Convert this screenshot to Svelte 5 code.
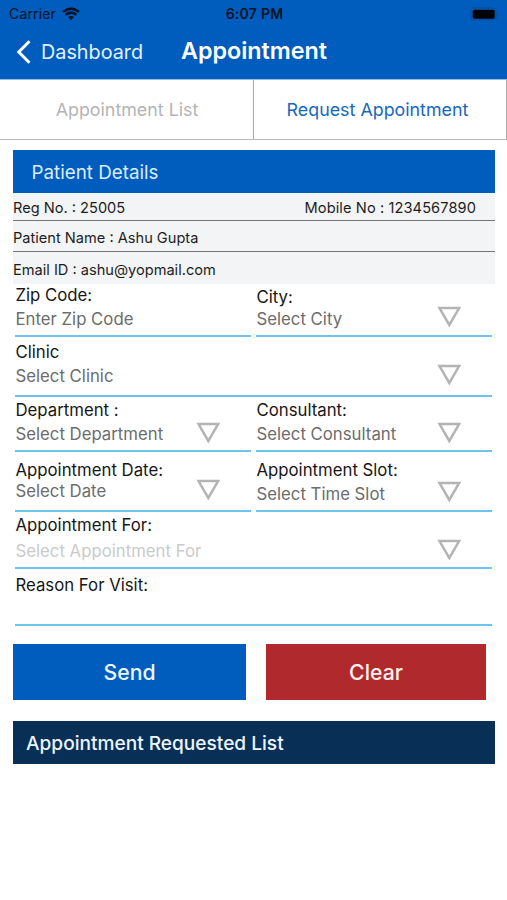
<script>
  // Offsets are measured from the top of each row.
  const rows = [
    { h: 53, fields: [
      { label: 'Zip Code:', hint: 'Enter Zip Code', lt: 1, ht: 25 },
      { label: 'City:', hint: 'Select City', lt: 3, ht: 25, at: 22 }
    ] },
    { h: 60, fields: [{ label: 'Clinic', hint: 'Select Clinic', lt: 5, ht: 29, at: 26.5 }] },
    { h: 55, fields: [
      { label: 'Department :', hint: 'Select Department', lt: 3, ht: 27, at: 24.5 },
      { label: 'Consultant:', hint: 'Select Consultant', lt: 3, ht: 27, at: 24.5 }
    ] },
    { h: 60, fields: [
      { label: 'Appointment Date:', hint: 'Select Date', lt: 8, ht: 29, at: 26.5 },
      { label: 'Appointment Slot:', hint: 'Select Time Slot', lt: 8, ht: 32, at: 29 }
    ] },
    { h: 57, fields: [{ label: 'Appointment For:', hint: 'Select Appointment For', lt: 3, ht: 29, at: 26.5, faint: true }] },
    { h: 57, fields: [{ label: 'Reason For Visit:', hint: '', lt: 6, ht: 30 }] }
  ];
</script>

<div class="screen">
  <header>
    <div class="status">
      <div class="carrier">
        <span>Carrier</span>
        <svg width="18" height="14" viewBox="0 0 18 14">
          <path d="M9 13.2 6 10.1Q9 7.8 12 10.1Z" fill="#071426" />
          <path d="M3.7 7.7Q9 3.6 14.3 7.7M1 4.9Q9-1.6 17 4.9" fill="none" stroke="#071426" stroke-width="2.5" />
        </svg>
      </div>
      <span class="time">6:07 PM</span>
      <div class="power">
        <svg width="30" height="14" viewBox="0 0 30 14">
          <rect x="1" y="1" width="25" height="12" rx="3.2" fill="none" stroke="#064a98" />
          <rect x="2.7" y="2.7" width="22" height="9" rx="1.6" fill="#000308" />
          <path d="M27.3 5.2Q29 7 27.3 8.8Z" fill="#064a98" />
        </svg>
      </div>
    </div>
    <nav>
      <svg width="15" height="24" viewBox="0 0 15 24"><path d="M13.5 1.2 2.8 12 13.5 22.8" fill="none" stroke="#fff" stroke-width="3" /></svg>
      <span class="back">Dashboard</span>
      <h1>Appointment</h1>
    </nav>
  </header>

  <div class="tabs">
    <div class="tab"><span>Appointment List</span></div>
    <div class="tab active"><span>Request Appointment</span></div>
  </div>

  <section class="patient">
    <h2>Patient Details</h2>
    <div class="info first"><span>Reg No. : 25005</span><span class="mobile">Mobile No : 1234567890</span></div>
    <div class="info second"><span>Patient Name : Ashu Gupta</span></div>
    <div class="info third"><span>Email ID : ashu@yopmail.com</span></div>
  </section>

  <form>
    {#each rows as row}
      <div class="row" style="height:{row.h}px">
        {#each row.fields as f}
          <div class="field">
            <div class="texts" style="padding-top:{f.lt}px;gap:{f.ht - f.lt - 20}px">
              <span class="label">{f.label}</span>
              <span class="hint" class:faint={f.faint}>{f.hint}</span>
            </div>
            {#if f.at}
              <svg class="arrow" style="margin-top:{f.at}px" width="24" height="22" viewBox="0 0 24 22">
                <path d="M2.5 2.1H22.1L12.3 19Z" fill="none" stroke="#b4b4b4" stroke-width="2.5" />
              </svg>
            {/if}
          </div>
        {/each}
      </div>
    {/each}
  </form>

  <div class="actions">
    <button class="send">Send</button>
    <button class="clear">Clear</button>
  </div>
  <div class="requested"><span>Appointment Requested List</span></div>
</div>

<style>
  :global(body) { margin: 0; background: #fff; }
  .screen { width: 507px; height: 900px; overflow: hidden; background: #fff; font-family: Inter, sans-serif; box-sizing: border-box; }
  .screen * { box-sizing: border-box; }
  span, h1, h2 { white-space: nowrap; }
  svg { display: block; flex: none; }
  header { height: 79px; background: #005cbd; }
  .status { height: 27px; display: grid; grid-template-columns: 1fr auto 1fr; align-items: center; padding: 0 7px 0 9px; font-size: 14px; color: #071426; }
  .carrier { display: flex; align-items: center; gap: 6px; letter-spacing: 0.15px; }
  .time { font-weight: 600; letter-spacing: 0.25px; }
  .power { display: flex; justify-content: flex-end; }
  nav { height: 50px; display: flex; align-items: center; padding-left: 16px; color: #fff; }
  .back { margin-left: 10px; width: 140px; font-size: 19.8px; color: #e4f1ff; }
  h1 { margin: 0; padding-bottom: 3px; font-size: 23.3px; font-weight: 600; }
  .tabs { height: 61px; display: flex; border-bottom: 1.5px solid #b9b9b9; border-top: 1px solid #8fbdec; }
  .tab { width: 253px; display: flex; align-items: center; justify-content: center; font-size: 17.85px; color: #b4b4b4; padding-left: 1px; }
  .active { width: 254px; border-left: 1px solid #aaa; border-right: 1px solid #aaa; color: #1768bd; padding: 0 5px 0 0; }
  .patient { margin: 10px 12px 0 13px; }
  h2 { margin: 0; height: 43px; line-height: 45px; padding-left: 18.5px; background: #005cbd; color: #dcecff; font-size: 18.8px; font-weight: 400; }
  .info { display: flex; align-items: center; justify-content: space-between; background: #f3f4f6; font-size: 14.6px; color: #1d1d1d; }
  .mobile { letter-spacing: 0.1px; }
  .first { height: 28px; padding-right: 19px; padding-top: 3px; border-bottom: 1px solid #777; }
  .second { height: 31px; padding-top: 4px; border-bottom: 1px solid #777; }
  .third { height: 32px; padding-top: 3px; }
  form { margin: 0 15px; }
  .row { display: flex; gap: 5px; }
  .field { flex: 1; display: flex; justify-content: space-between; border-bottom: 2px solid #6ec5ec; padding-left: 0.5px; padding-right: 31px; }
  .texts { display: flex; flex-direction: column; }
  .label, .hint { font-size: 16.75px; line-height: 20px; height: 20px; color: #161616; }
  .hint { color: #6c6c6c; }
  .hint.faint { color: #cacaca; }
  .actions { display: flex; gap: 20px; margin: 18px 0 0 13px; }
  button { border: 0; padding: 0; height: 56px; font: 500 21.2px Inter, sans-serif; color: #eef5ff; }
  .send { width: 233px; background: #005cbd; }
  .clear { width: 220px; background: #b0292d; color: #fff0ef; }
  .requested { margin: 21px 12px 0 13px; height: 43px; background: #082f55; color: #eef5ff; font-size: 19.1px; font-weight: 500; padding-left: 13px; display: flex; align-items: center; }
</style>
